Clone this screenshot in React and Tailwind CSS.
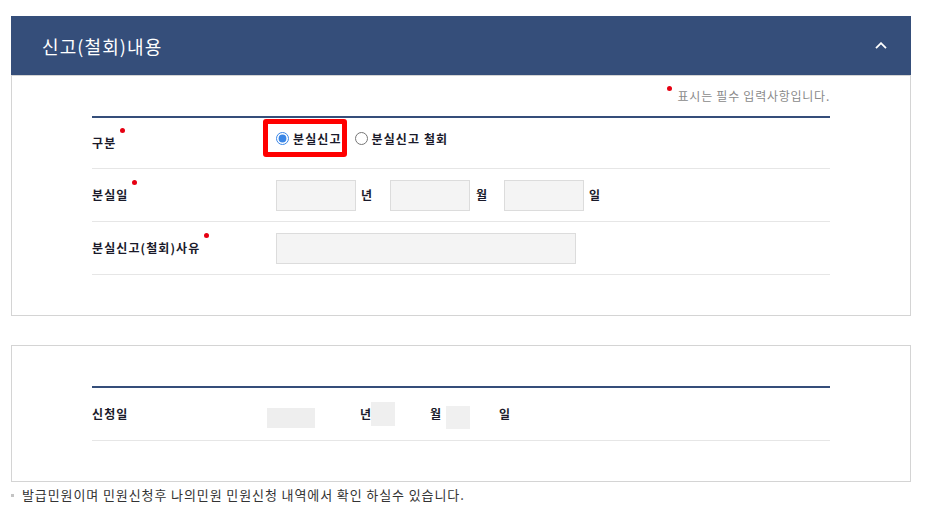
import React from "react";

const FONT = { fontFamily: '"Noto Sans CJK KR", "Noto Sans", "Liberation Sans", sans-serif' };

function Req({ children }) {
  return (
    <span className="relative inline-block leading-[14px]">
      {children}
      <span className="absolute -right-[9px] -top-[8px] h-[5px] w-[5px] rounded-full bg-[#e60012]" />
    </span>
  );
}

function Radio({ checked, label }) {
  return (
    <label className="flex items-center">
      <input
        type="radio"
        name="gubun"
        defaultChecked={checked}
        className="m-0 h-[13px] w-[13px] accent-[#3a86e6]"
      />
      <span className="ml-[4px] text-[12px] font-bold leading-[14px] tracking-[1.1px] text-[#1a1a2a]">{label}</span>
    </label>
  );
}

function Input({ w }) {
  return <div className={`h-[31px] border border-[#dcdcdc] bg-[#f4f4f4] ${w}`} />;
}

export default function App() {
  return (
    <div className="min-h-screen bg-white pl-[11px] pt-[16px]" style={FONT}>
      <div className="w-[900px]">
        {/* Panel 1 header */}
        <div className="flex h-[59px] items-center justify-between bg-[#354e7a] pl-[31px] pr-[24px]">
          <span className="text-[18px] leading-[22px] tracking-[1.1px] text-white">신고(철회)내용</span>
          <svg width="12" height="7" viewBox="0 0 12 7" className="mb-[1px]">
            <path d="M1 6.2 L6 1.2 L11 6.2" fill="none" stroke="#ffffff" strokeWidth="1.8" />
          </svg>
        </div>

        {/* Panel 1 body */}
        <div className="border border-[#d4d4d4] px-[80px] pb-[40px] pt-[13px]">
          <div className="flex justify-end">
            <span className="relative pl-[11px] text-[12px] leading-[14px] tracking-[0.75px] text-[#8a8a8a]">
              <span className="absolute left-0 -top-[3px] h-[5px] w-[5px] rounded-full bg-[#e60012]" />
              표시는 필수 입력사항입니다.
            </span>
          </div>

          <div className="mt-[13px] border-t-2 border-[#354e7a]">
            {/* Row 1 */}
            <div className="flex h-[51px] items-center border-b border-[#e6e6e6]">
              <div className="w-[184px] text-[12px] font-bold tracking-[1.1px] text-[#1a1a2a]">
                <Req>구분</Req>
              </div>
              <div className="relative -mt-[9px] flex items-center">
                <div className="pointer-events-none absolute -left-[13px] -top-[13px] h-[38px] w-[84px] rounded-[3px] border-[5px] border-[#ff0000]" />
                <Radio checked label="분실신고" />
                <div className="ml-[13px]">
                  <Radio label="분실신고 철회" />
                </div>
              </div>
            </div>

            {/* Row 2 */}
            <div className="flex h-[53px] items-center border-b border-[#e6e6e6]">
              <div className="w-[184px] text-[12px] font-bold tracking-[1.1px] text-[#1a1a2a]">
                <Req>분실일</Req>
              </div>
              <div className="flex items-center text-[12px] font-bold leading-[14px] text-[#1a1a2a]">
                <Input w="w-[80px]" />
                <span className="ml-[5px]">년</span>
                <div className="ml-[18px]">
                  <Input w="w-[80px]" />
                </div>
                <span className="ml-[6px]">월</span>
                <div className="ml-[17px]">
                  <Input w="w-[80px]" />
                </div>
                <span className="ml-[5px]">일</span>
              </div>
            </div>

            {/* Row 3 */}
            <div className="flex h-[53px] items-center border-b border-[#e6e6e6]">
              <div className="w-[184px] text-[12px] font-bold tracking-[1.1px] text-[#1a1a2a]">
                <Req>분실신고(철회)사유</Req>
              </div>
              <Input w="w-[300px]" />
            </div>
          </div>
        </div>

        {/* Panel 2 */}
        <div className="mt-[29px] border border-[#d4d4d4] px-[80px] pb-[40px] pt-[40px]">
          <div className="border-t-2 border-[#354e7a]">
            <div className="flex h-[53px] items-center border-b border-[#e6e6e6] text-[12px] font-bold leading-[14px] text-[#1a1a2a]">
              <div className="w-[175px] tracking-[1.1px]">신청일</div>
              <div className="mt-[8px] h-[20px] w-[48px] bg-[#eeeeee]" />
              <span className="ml-[45px]">년</span>
              <div className="h-[24px] w-[24px] bg-[#efefef]" />
              <span className="ml-[35px]">월</span>
              <div className="ml-[5px] mt-[7px] h-[23px] w-[24px] bg-[#f0f0f0]" />
              <span className="ml-[29px]">일</span>
            </div>
          </div>
        </div>

        {/* Footnote */}
        <div className="mt-[5px] flex items-center">
          <span className="h-[3px] w-[3px] bg-[#c4c4c4]" />
          <span className="ml-[8px] text-[13px] leading-[16px] tracking-[0.9px] text-[#333333]">
            발급민원이며 민원신청후 나의민원 민원신청 내역에서 확인 하실수 있습니다.
          </span>
        </div>
      </div>
    </div>
  );
}
